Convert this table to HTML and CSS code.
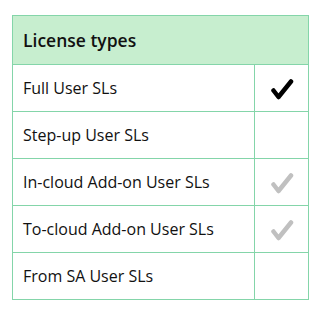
FILE: index.html
```html
<!DOCTYPE html>
<html>
  <head>
    <meta charset="UTF-8">
    <title>License types</title>
    <link rel="stylesheet" href="styles.css">
  </head>
  <body>
    <table class="license-table">
      <thead>
        <tr>
          <th colspan="2">License types</th>
        </tr>
      </thead>
      <tbody>
        <tr>
          <td>Full User SLs</td>
          <td class="check">
            <svg class="mark mark-on" viewBox="0 0 24 22"><path d="M3.5 12.5 L8.5 19 L21 3.5"/></svg>
          </td>
        </tr>
        <tr>
          <td>Step-up User SLs</td>
          <td class="check"></td>
        </tr>
        <tr>
          <td>In-cloud Add-on User SLs</td>
          <td class="check">
            <svg class="mark mark-off" viewBox="0 0 24 22"><path d="M3.5 12.5 L8.5 19 L21 3.5"/></svg>
          </td>
        </tr>
        <tr>
          <td>To-cloud Add-on User SLs</td>
          <td class="check">
            <svg class="mark mark-off" viewBox="0 0 24 22"><path d="M3.5 12.5 L8.5 19 L21 3.5"/></svg>
          </td>
        </tr>
        <tr>
          <td>From SA User SLs</td>
          <td class="check"></td>
        </tr>
      </tbody>
    </table>
  </body>
</html>
```

FILE: styles.css
```css
body {
  margin: 0;
  padding: 15px 0 0 12px;
  background-color: #fff;
  font-family: 'Open Sans', 'Noto Sans', sans-serif;
  color: #111;
}
.license-table {
  border-collapse: collapse;
  width: 297px;
}
.license-table th,
.license-table td {
  border: 1px solid #84d5a9;
  text-align: left;
  padding: 0 0 0 10px;
}
.license-table th {
  background-color: #c7eecf;
  height: 48px;
  font-size: 17.5px;
  font-weight: 600;
}
.license-table td {
  height: 46px;
  font-size: 16px;
}
.license-table td.check {
  width: 53px;
  padding: 0;
  text-align: center;
}
.mark {
  display: block;
  width: 24px;
  height: 22px;
  margin: 1px auto 0;
  fill: none;
  stroke-width: 4.5;
  stroke-linecap: round;
  stroke-linejoin: round;
}
.mark-on {
  stroke: #000;
}
.mark-off {
  stroke: #c0c0c0;
}
```
